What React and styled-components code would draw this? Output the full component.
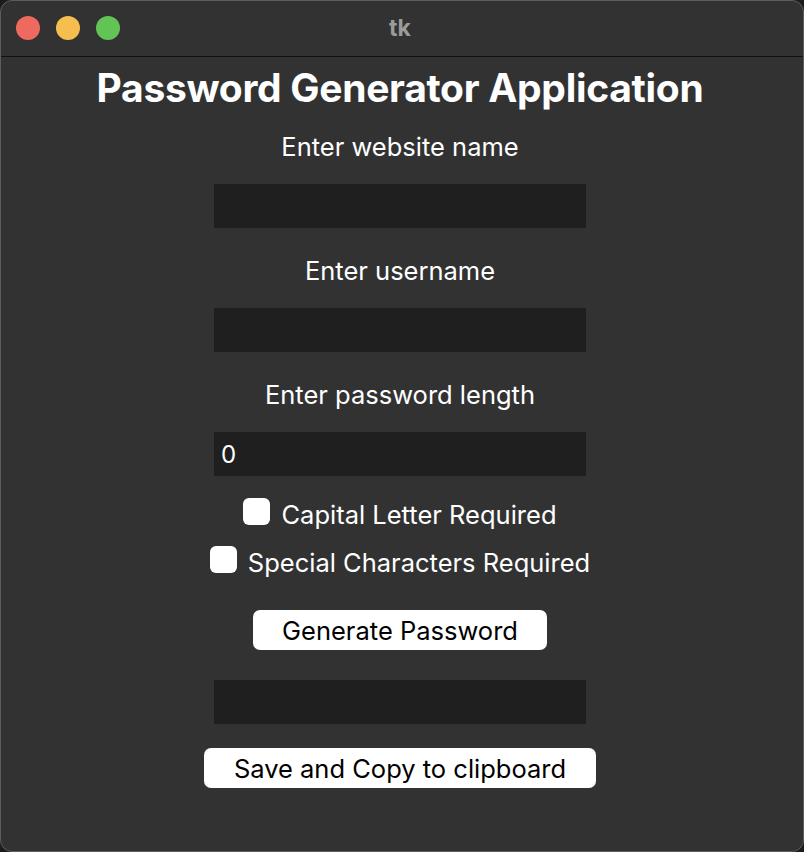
import React from "react";
import styled, { createGlobalStyle } from "styled-components";

const GlobalStyle = createGlobalStyle`
  html, body {
    margin: 0;
    padding: 0;
    background: #1c1c1e;
  }
  body {
    font-family: Inter, "Noto Sans", "Liberation Sans", sans-serif;
  }
`;

const Window = styled.div`
  box-sizing: border-box;
  width: 804px;
  height: 852px;
  background: #323232;
  border: 1px solid #5c5c5c;
  border-radius: 12px;
  overflow: hidden;
  display: flex;
  flex-direction: column;
`;

const TitleBar = styled.div`
  position: relative;
  height: 55px;
  flex-shrink: 0;
  display: flex;
  align-items: center;
  justify-content: center;
  padding-right: 4px;
  border-bottom: 1px solid #111;
`;

const Lights = styled.div`
  position: absolute;
  left: 15px;
  top: 15px;
  display: flex;
  gap: 16px;
`;

const Light = styled.span`
  width: 24px;
  height: 24px;
  border-radius: 50%;
  background: ${(p) => p.$color};
`;

const WindowTitle = styled.div`
  color: #9b9b9b;
  font-weight: 700;
  font-size: 23px;
  margin-top: -2px;
`;

const Content = styled.div`
  display: flex;
  flex-direction: column;
  align-items: center;
  padding-top: 9px;
  padding-right: 4px;
  color: #fff;
`;

const Heading = styled.h1`
  margin: 0;
  font-size: 39px;
  line-height: 44px;
  font-weight: 700;
  letter-spacing: -0.3px;
  white-space: nowrap;
`;

const Label = styled.div`
  font-size: 25.5px;
  line-height: 30px;
  margin-top: ${(p) => p.$top}px;
`;

const Entry = styled.div`
  box-sizing: border-box;
  width: 372px;
  height: 44px;
  background: #1f1f1f;
  margin-top: ${(p) => p.$top}px;
  display: flex;
  align-items: center;
  padding-left: 7px;
  font-size: 24px;
  color: #fff;
`;

const CheckRow = styled.label`
  display: flex;
  align-items: center;
  gap: 11px;
  height: 30px;
  font-size: 25.5px;
  white-space: nowrap;
  margin-top: ${(p) => p.$top}px;
`;

const Box = styled.span`
  width: 27px;
  height: 27px;
  border-radius: 6px;
  background: #fff;
  margin-top: -5px;
`;

const Button = styled.button`
  box-sizing: border-box;
  width: ${(p) => p.$width}px;
  height: 40px;
  margin-top: ${(p) => p.$top}px;
  background: #fff;
  border: none;
  border-radius: 7px;
  color: #000;
  font-family: inherit;
  font-size: 25.5px;
  padding: 0;
  white-space: nowrap;
`;

export default function App() {
  return (
    <>
      <GlobalStyle />
      <Window>
        <TitleBar>
          <Lights>
            <Light $color="#ee6a5f" />
            <Light $color="#f5be4f" />
            <Light $color="#61c454" />
          </Lights>
          <WindowTitle>tk</WindowTitle>
        </TitleBar>
        <Content>
          <Heading>Password Generator Application</Heading>
          <Label $top={22}>Enter website name</Label>
          <Entry $top={22} />
          <Label $top={28}>Enter username</Label>
          <Entry $top={22} />
          <Label $top={28}>Enter password length</Label>
          <Entry $top={22}>0</Entry>
          <CheckRow $top={23}>
            <Box />
            Capital Letter Required
          </CheckRow>
          <CheckRow $top={18}>
            <Box />
            Special Characters Required
          </CheckRow>
          <Button $top={33} $width={294}>
            Generate Password
          </Button>
          <Entry $top={30} />
          <Button $top={24} $width={392}>
            Save and Copy to clipboard
          </Button>
        </Content>
      </Window>
    </>
  );
}
